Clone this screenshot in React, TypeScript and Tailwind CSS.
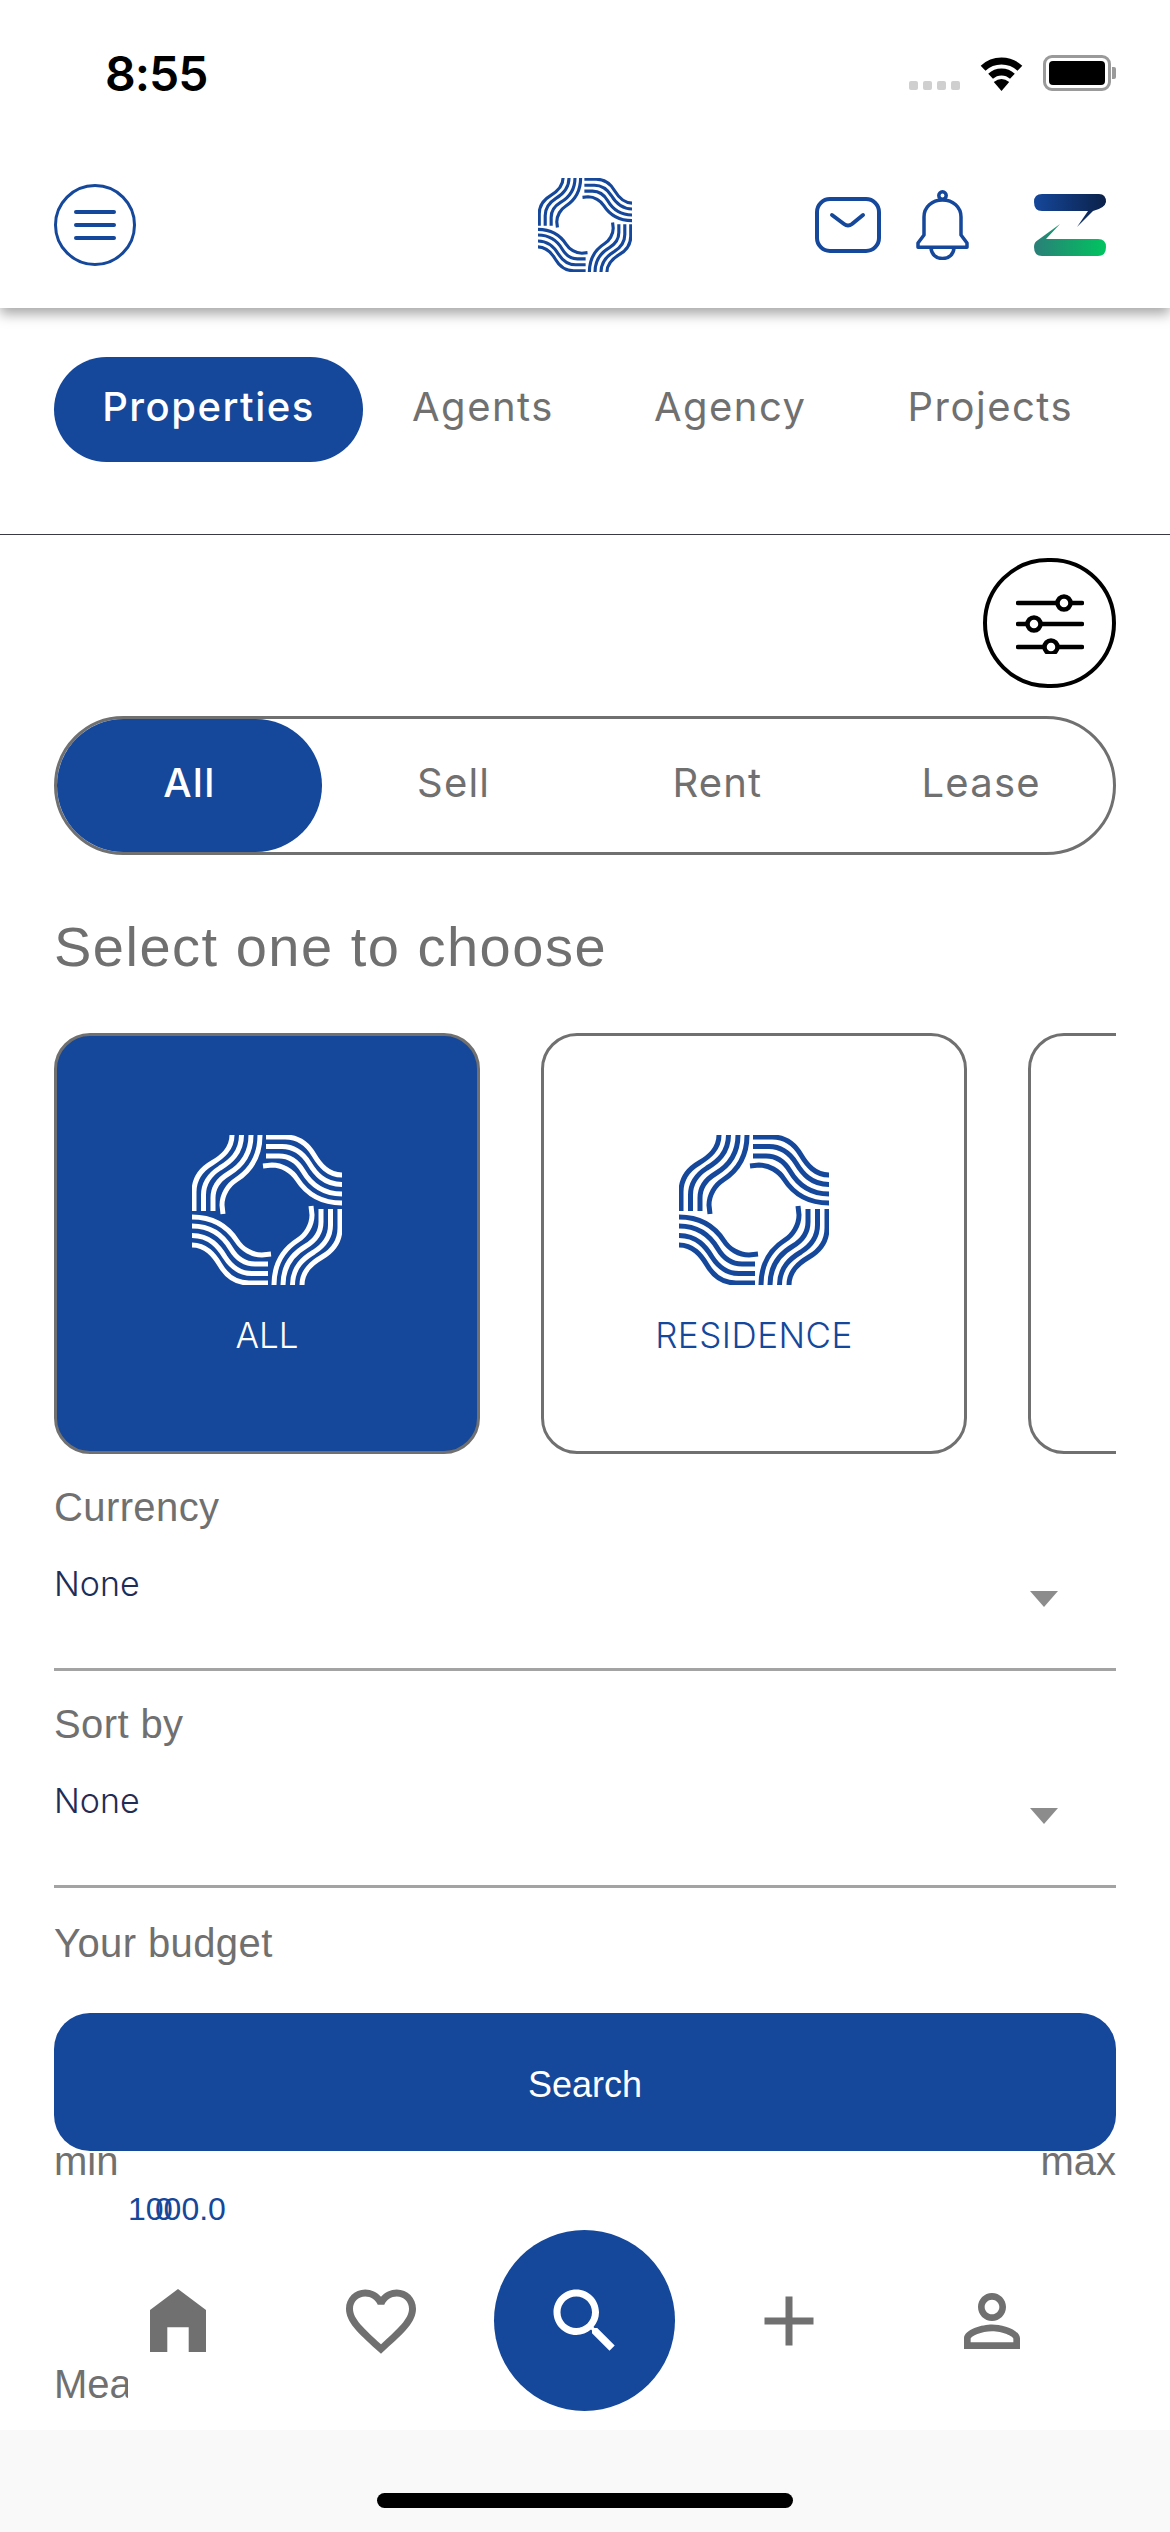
// brand mark, one arm drawn four times
function Logo({ className }: { className?: string }) {
  const arm = (
    <g>
      <path d="M40 0C40 14 30 22 20 28C8 35 2 45 2 57V76" />
      <path d="M49.5 0C49.5 18 38 27 28 33C17 40 11.5 49 11.5 60V76" />
      <path d="M59 0C59 20 48 32 36 39C26 45 21 53 21 63V76" />
      <path d="M68 0C68 22 58 36 44 45C36 50 30 60 30 70L31 79" />
    </g>
  );
  return (
    <svg viewBox="0 0 150 150" className={className} fill="none" stroke="currentColor" strokeWidth="5">
      {arm}
      <g transform="rotate(90 75 75)">{arm}</g>
      <g transform="rotate(180 75 75)">{arm}</g>
      <g transform="rotate(270 75 75)">{arm}</g>
    </svg>
  );
}

function ZLogo() {
  return (
    <svg viewBox="0 0 72 62" className="w-[72px] h-[62px]">
      <defs>
        <linearGradient id="zTop" x1="0" x2="1" y1="0" y2="0">
          <stop offset="0" stopColor="#15479a" />
          <stop offset="1" stopColor="#0b2149" />
        </linearGradient>
        <linearGradient id="zBottom" x1="0" x2="1" y1="0" y2="0">
          <stop offset="0" stopColor="#2a7f78" />
          <stop offset="1" stopColor="#00c45f" />
        </linearGradient>
      </defs>
      <path d="M8 0H65Q72 0 72 8Q71 14 59 17L43 33L54 17H8Q0 17 0 8Q0 0 8 0Z" fill="url(#zTop)" />
      <path d="M26 30L12 45H64Q72 45 72 53Q72 62 64 62H8Q0 62 0 53Q0 48 4 46Z" fill="url(#zBottom)" />
    </svg>
  );
}

function MaterialIcon({ d, className }: { d: string; className?: string }) {
  return (
    <svg viewBox="0 0 24 24" className={className} fill="currentColor">
      <path d={d} />
    </svg>
  );
}

function StatusBar() {
  return (
    <div className="relative z-20 h-[100px] bg-white flex items-start justify-between pl-[105px] pr-[54px] pt-[46px]">
      <span className="text-[48px] leading-[56px] font-semibold text-black font-['Inter',sans-serif] tracking-[-1px]">8:55</span>
      <div className="flex items-end gap-[17px] mt-[9px]">
        <div className="flex gap-[5px] mb-[1px]">
          <span className="w-[9px] h-[9px] rounded-[2px] bg-[#cfcfcf]" />
          <span className="w-[9px] h-[9px] rounded-[2px] bg-[#cfcfcf]" />
          <span className="w-[9px] h-[9px] rounded-[2px] bg-[#cfcfcf]" />
          <span className="w-[9px] h-[9px] rounded-[2px] bg-[#cfcfcf]" />
        </div>
        <svg viewBox="0 0 49 36" className="w-[49px] h-[36px]" fill="none" stroke="#000" strokeWidth="7">
          <path d="M6.1 13.3A27 27 0 0 1 42.9 13.3" />
          <path d="M13.6 21.3A16 16 0 0 1 35.4 21.3" />
          <path d="M24.5 36L16.8 27Q24.5 21 32.2 27Z" fill="#000" stroke="none" />
        </svg>
        <div className="flex items-center">
          <div className="w-[68px] h-[36px] rounded-[9px] border-[3px] border-[#9a9a9a] p-[3px]">
            <div className="w-full h-full rounded-[4px] bg-black" />
          </div>
          <div className="w-[4px] h-[12px] ml-[1px] rounded-r-[2px] bg-[#9a9a9a]" />
        </div>
      </div>
    </div>
  );
}

function Header() {
  return (
    <div className="relative z-10 h-[208px] grid grid-cols-[1fr_auto_1fr] items-center px-[54px] pt-[42px] bg-white shadow-[0_6px_12px_rgba(0,0,0,0.35)]">
      <div className="w-[82px] h-[82px] rounded-full border-[3px] border-[#15479a] flex flex-col items-center justify-center gap-[9px]">
        <span className="w-[42px] h-[4px] rounded-full bg-[#15479a]" />
        <span className="w-[42px] h-[4px] rounded-full bg-[#15479a]" />
        <span className="w-[42px] h-[4px] rounded-full bg-[#15479a]" />
      </div>
      <Logo className="w-[94px] h-[94px] text-[#15479a]" />
      <div className="flex items-center justify-end pr-[10px]">
        <svg viewBox="0 0 66 56" className="w-[66px] h-[56px]" fill="none" stroke="#15479a" strokeWidth="4" strokeLinecap="round" strokeLinejoin="round">
          <rect x="2" y="2" width="62" height="52" rx="13" />
          <path d="M17 18L29 27Q33 30 37 27L48 18" />
        </svg>
        <svg viewBox="0 0 53 70" className="w-[53px] h-[70px] ml-[35px]" fill="none" stroke="#15479a" strokeWidth="3.5" strokeLinejoin="round">
          <circle cx="26.5" cy="5.5" r="3.7" />
          <path d="M2 57.3V53L8 45V27C8 17 16 10 26.5 10C37 10 45 17 45 27V45L51 53V57.3Z" />
          <path d="M15 57.3C15 64 20 68.5 26.5 68.5C33 68.5 38 64 38 57.3" />
        </svg>
        <div className="ml-[65px]">
          <ZLogo />
        </div>
      </div>
    </div>
  );
}

function TopTabs() {
  return (
    <div className="h-[227px] pt-[49px] border-b border-[#3a3a44]">
      <div className="flex items-center pl-[54px] text-[40px] tracking-[1.5px] text-[#707070] font-['Inter',sans-serif]">
        <div className="w-[309px] h-[105px] rounded-full bg-[#15479a] text-white font-medium flex items-center justify-center pb-[6px]">Properties</div>
        <span className="ml-[49px] pb-[6px]">Agents</span>
        <span className="ml-[100px] pb-[6px]">Agency</span>
        <span className="ml-[101px] pb-[6px]">Projects</span>
      </div>
    </div>
  );
}

function Dropdown({ label, className }: { label: string; className?: string }) {
  return (
    <div className={className}>
      <div className="text-[40px] leading-[46px] tracking-[0.4px] text-[#707070] font-['Liberation_Sans',sans-serif]">{label}</div>
      <div className="h-[141px] border-b-[3px] border-[#a3a3a3] pt-[34px] flex justify-between">
        <span className="text-[34px] leading-[40px] font-light text-[#1f2c56] font-['Inter',sans-serif]">None</span>
        <span className="mt-[27px] mr-[58px] w-0 h-0 border-x-[14px] border-x-transparent border-t-[16px] border-t-[#8c8c8c]" />
      </div>
    </div>
  );
}

export default function App() {
  return (
    <div className="relative w-[1170px] h-[2532px] overflow-hidden bg-white">
      <StatusBar />
      <Header />
      <TopTabs />

      <div className="px-[54px]">
        <div className="flex justify-end mt-[23px]">
          <div className="w-[133px] h-[130px] rounded-full border-[4px] border-black flex items-center justify-center">
            <svg viewBox="0 0 68 62" className="w-[68px] h-[62px]" fill="none" stroke="#000" strokeWidth="4.5" strokeLinecap="round">
              <path d="M2 11H66M2 32H66M2 55H66" />
              <circle cx="48" cy="11" r="6.5" fill="#fff" />
              <circle cx="18" cy="32" r="6.5" fill="#fff" />
              <circle cx="35" cy="55" r="6.5" fill="#fff" />
            </svg>
          </div>
        </div>

        <div className="mt-[28px] h-[139px] rounded-full border-[3px] border-[#707070] flex items-center text-[40px] text-[#707070] tracking-[1.2px] font-['Inter',sans-serif]">
          <div className="w-[265px] h-[133px] rounded-full bg-[#15479a] text-white font-medium flex items-center justify-center pb-[6px]">All</div>
          <div className="w-[264px] text-center pb-[6px]">Sell</div>
          <div className="w-[264px] text-center pb-[6px]">Rent</div>
          <div className="w-[264px] text-center pb-[6px]">Lease</div>
        </div>

        <div className="mt-[62px] text-[56px] leading-[60px] tracking-[1.5px] text-[#707070] font-['Liberation_Sans',sans-serif]">Select one to choose</div>

        <div className="mt-[56px] flex gap-[61px] overflow-hidden">
          <div className="shrink-0 w-[426px] h-[421px] rounded-[36px] border-[3px] border-[#707070] bg-[#15479a] text-white flex flex-col items-center pt-[99px]">
            <Logo className="w-[150px] h-[150px]" />
            <span className="mt-[30px] text-[35px] leading-[40px] font-light font-['Inter',sans-serif]">ALL</span>
          </div>
          <div className="shrink-0 w-[426px] h-[421px] rounded-[36px] border-[3px] border-[#707070] text-[#15479a] flex flex-col items-center pt-[99px]">
            <Logo className="w-[150px] h-[150px]" />
            <span className="mt-[30px] text-[35px] leading-[40px] tracking-[0.5px] font-light font-['Inter',sans-serif]">RESIDENCE</span>
          </div>
          <div className="shrink-0 w-[426px] h-[421px] rounded-[36px] border-[3px] border-[#707070]" />
        </div>

        <Dropdown label="Currency" className="mt-[30px]" />
        <Dropdown label="Sort by" className="mt-[30px]" />

        <div className="mt-[32px] text-[40px] leading-[46px] tracking-[0.4px] text-[#707070] font-['Liberation_Sans',sans-serif]">Your budget</div>
        <div className="mt-[172px] flex justify-between text-[40px] leading-[46px] text-[#707070] font-['Liberation_Sans',sans-serif]">
          <span>min</span>
          <span>max</span>
        </div>
      </div>

      {/* overlays: fixed button, slider labels, tab bar */}
      <div className="absolute left-[54px] top-[2013px] w-[1062px] h-[138px] rounded-[36px] bg-[#15479a] flex items-center justify-center pt-[6px] text-[36px] text-white font-['Liberation_Sans',sans-serif]">Search</div>

      <div className="absolute left-[128px] top-[2190px] text-[32px] leading-[38px] text-[#15479a] font-['Liberation_Sans',sans-serif]">1000.0</div>
      <div className="absolute left-[155px] top-[2190px] text-[32px] leading-[38px] text-[#15479a] font-['Liberation_Sans',sans-serif]">0</div>

      <div className="absolute left-[54px] top-[2361px] w-[74px] overflow-hidden text-[40px] leading-[46px] text-[#707070] font-['Liberation_Sans',sans-serif]">Mea</div>

      <div className="absolute left-0 right-0 top-[2230px] h-[181px] grid grid-cols-5 items-center justify-items-center px-[76px] text-[#707070]">
        <svg viewBox="0 0 56 63" className="w-[56px] h-[63px]" fill="currentColor">
          <path d="M28 0L56 21V63H38.7V38.3H17.3V63H0V21Z" />
        </svg>
        <MaterialIcon
          className="w-[84px] h-[84px]"
          d="M16.5 3c-1.74 0-3.41.81-4.5 2.09C10.91 3.81 9.24 3 7.5 3 4.42 3 2 5.42 2 8.5c0 3.78 3.4 6.86 8.55 11.54L12 21.35l1.45-1.32C18.6 15.36 22 12.28 22 8.5 22 5.42 19.58 3 16.5 3zm-4.4 15.55l-.1.1-.1-.1C7.14 14.24 4 11.39 4 8.5 4 6.5 5.5 5 7.5 5c1.54 0 3.04.99 3.57 2.36h1.87C13.46 5.99 14.96 5 16.5 5c2 0 3.5 1.5 3.5 3.5 0 2.89-3.14 5.74-7.9 10.05z"
        />
        <div className="w-[181px] h-[181px] rounded-full bg-[#15479a] text-white flex items-center justify-center">
          <MaterialIcon
            className="w-[84px] h-[84px]"
            d="M15.5 14h-.79l-.28-.27C15.41 12.59 16 11.11 16 9.5 16 5.91 13.09 3 9.5 3S3 5.91 3 9.5 5.91 16 9.5 16c1.61 0 3.09-.59 4.23-1.57l.27.28v.79l5 4.99L20.49 19l-4.99-5zm-6 0C7.01 14 5 11.99 5 9.5S7.01 5 9.5 5 14 7.01 14 9.5 11.99 14 9.5 14z"
          />
        </div>
        <MaterialIcon className="w-[84px] h-[84px]" d="M19 13h-6v6h-2v-6H5v-2h6V5h2v6h6v2z" />
        <MaterialIcon
          className="w-[84px] h-[84px]"
          d="M12 5.9c1.16 0 2.1.94 2.1 2.1s-.94 2.1-2.1 2.1S9.9 9.16 9.9 8s.94-2.1 2.1-2.1m0 9c2.97 0 6.1 1.46 6.1 2.1v1.1H5.9V17c0-.64 3.13-2.1 6.1-2.1M12 4C9.79 4 8 5.79 8 8s1.79 4 4 4 4-1.79 4-4-1.79-4-4-4zm0 9c-2.67 0-8 1.34-8 4v3h16v-3c0-2.66-5.33-4-8-4z"
        />
      </div>

      <div className="absolute left-0 right-0 bottom-0 h-[102px] bg-[#f9f9f9] flex justify-center pt-[63px]">
        <div className="w-[416px] h-[15px] rounded-full bg-black" />
      </div>
    </div>
  );
}
